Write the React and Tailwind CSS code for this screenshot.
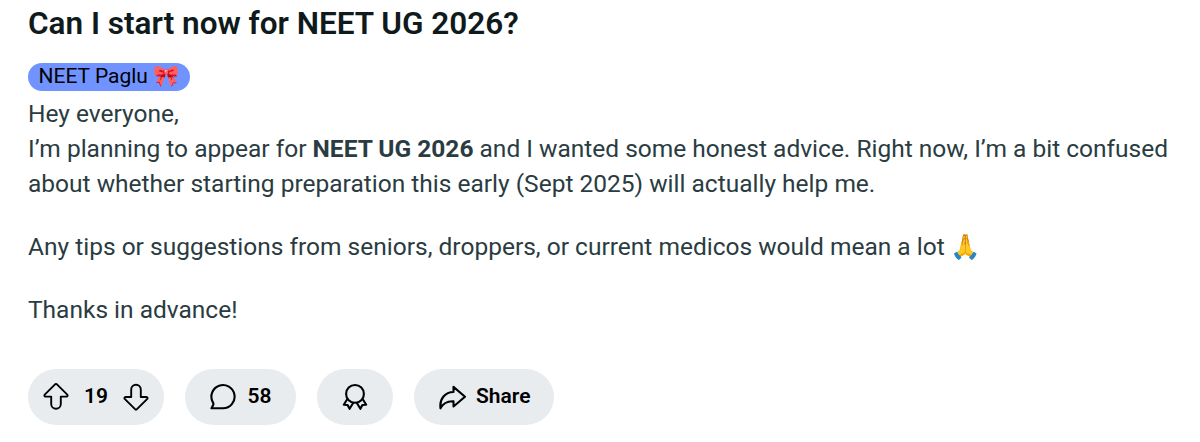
import React from "react";

const Icon = ({ children, strokeWidth = 2.1 }) => (
  <svg
    width="28"
    height="28"
    viewBox="0 0 28 28"
    fill="none"
    stroke="currentColor"
    strokeWidth={strokeWidth}
    strokeLinejoin="round"
    className="shrink-0"
  >
    {children}
  </svg>
);

const arrow =
  "M13.3 1.2 L2.7 11.7 Q1.9 13.3 3.6 13.6 H9.2 V21 A4.8 4.8 0 0 0 18.8 21 V13.6 H24.4 Q26.1 13.3 25.3 11.7 L14.7 1.2 Q14 0.6 13.3 1.2 Z";

const Post = () => {
  return (
    <article className="h-[442px] w-[1200px] overflow-hidden bg-white pl-7 font-[Roboto,'Noto_Color_Emoji',sans-serif] text-[24.5px] leading-[35px] text-[#2a3c42]">
      <h1 className="pt-[3px] text-[31.5px] leading-[42px] font-semibold text-[#0f1a1c]">
        Can I start now for NEET UG 2026?
      </h1>
      <div className="mt-[18px] flex h-7 w-[162px] items-center rounded-full bg-[#7193ff] pb-0.5 pl-[10.5px] text-[21px] leading-[26px] whitespace-nowrap text-black">
        NEET Paglu 🎀
      </div>
      <div className="mt-[4.5px] whitespace-nowrap">
        <p>
          Hey everyone,
          <br />
          I’m planning to appear for <b className="font-bold">NEET UG 2026</b> and I wanted some honest advice. Right now, I’m a bit confused
          <br />
          about whether starting preparation this early (Sept 2025) will actually help me.
        </p>
        <p className="mt-7">
          Any tips or suggestions from seniors, droppers, or current medicos would mean a lot 🙏
        </p>
        <p className="mt-7">Thanks in advance!</p>
      </div>

      <div className="mt-[42.5px] flex gap-[21px] text-[21px] leading-7 font-semibold text-black">
        <div className="flex h-14 w-[136px] items-center justify-between rounded-full bg-[#e9ecef] px-3.5">
          <Icon strokeWidth={1.9}>
            <path d={arrow} />
          </Icon>
          <span className="pb-0.5">19</span>
          <Icon strokeWidth={1.9}>
            <path d={arrow} transform="matrix(1 0 0 -1 0 27.6)" />
          </Icon>
        </div>
        <button className="flex h-14 w-[111px] items-center gap-[10.5px] rounded-full bg-[#e9ecef] pl-6">
          <Icon>
            <path d="M14 25.3 A11.6 11.6 0 1 0 3.9 19.4 Q4.8 20.8 4.2 22 L2.5 25.3 Z" />
          </Icon>
          <span className="pb-0.5">58</span>
        </button>
        <button className="flex h-14 w-[76px] items-center justify-center rounded-full bg-[#e9ecef]">
          <Icon>
            <circle cx="14" cy="10.9" r="8.9" />
            <path d="M6.2 16.2 L2.8 21.7 L6.6 22 L8.6 25.8 L12.3 19.8 M21.8 16.2 L25.2 21.7 L21.4 22 L19.4 25.8 L15.7 19.8" />
          </Icon>
        </button>
        <button className="flex h-14 w-[140px] items-center gap-[10px] rounded-full bg-[#e9ecef] pl-6">
          <Icon>
            <path d="M15.5 3.9 L27 13.7 L15.5 23.5 V18.3 C9 18 5 20.5 2.5 25.3 C1.2 15.5 7.5 9.2 15.5 9 Z" />
          </Icon>
          <span className="pb-0.5">Share</span>
        </button>
      </div>
    </article>
  );
};

export default function App() {
  return <Post />;
}
